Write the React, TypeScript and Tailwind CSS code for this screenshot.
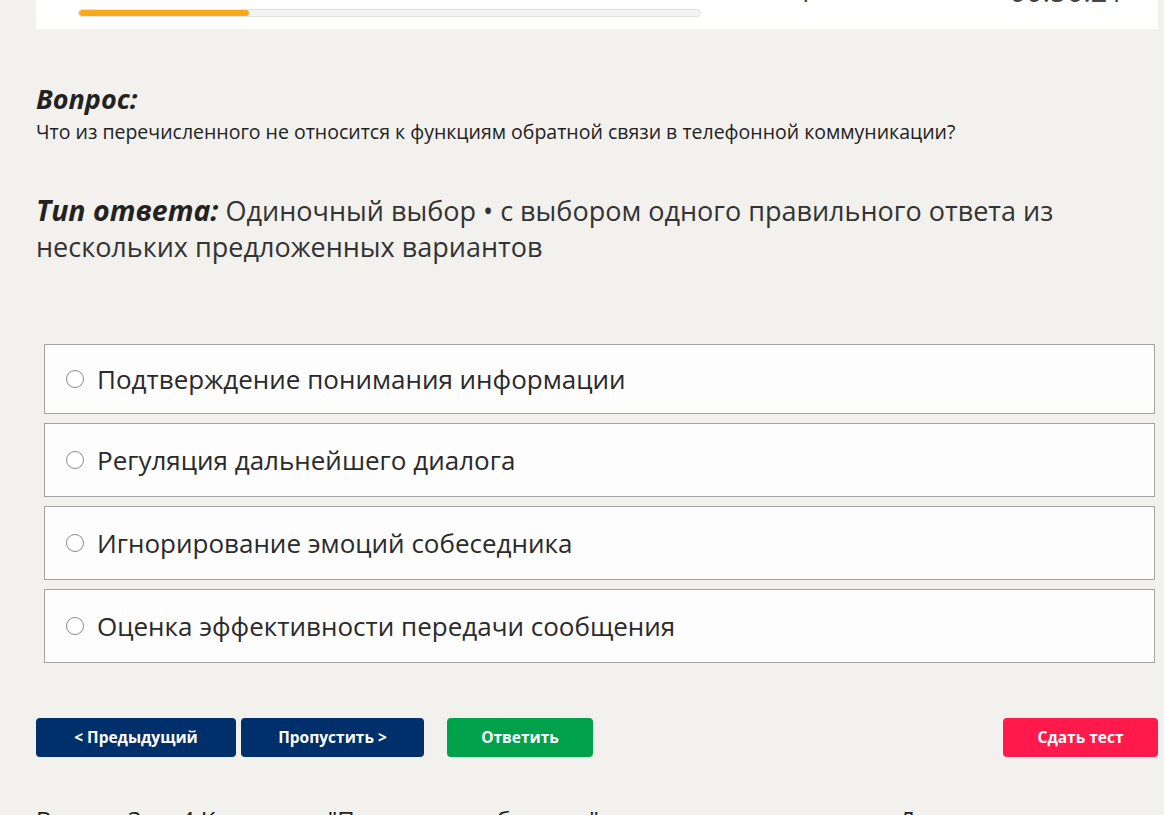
import React from "react";

const options = [
  "Подтверждение понимания информации",
  "Регуляция дальнейшего диалога",
  "Игнорирование эмоций собеседника",
  "Оценка эффективности передачи сообщения",
];

export default function App() {
  return (
    <div
      className="min-h-[815px] w-full overflow-hidden bg-[#f2f1ee] text-[#222]"
      style={{ fontFamily: '"Open Sans", "Noto Sans", sans-serif' }}
    >
      <div className="-mt-[40px] px-[36px] pr-[6px]">
        <div className="flex h-[69px] items-end justify-between bg-white pb-[12px] pl-[42px] pr-[34px]">
          <div className="h-[8px] w-[623px] overflow-hidden rounded-full border border-[#e2e2e2] bg-[#f3f3f3]">
            <div className="h-full w-[170px] rounded-full bg-[#f7a81b]" />
          </div>
          <div className="mb-[12px] flex items-center text-[29px] leading-none text-[#444]">
            <span className="mr-[196px]">1</span>
            <span>00:50:21</span>
          </div>
        </div>

        <div className="pt-[53px]">
          <h2 className="text-[27px] font-bold italic leading-[34px] text-[#222]">Вопрос:</h2>
          <p className="mt-[3px] text-[19.5px] leading-[26px] text-[#222]">
            Что из перечисленного не относится к функциям обратной связи в телефонной коммуникации?
          </p>
        </div>

        <p className="mt-[47px] pr-[90px] text-[27px] leading-[36px] text-[#333]">
          <span className="text-[28.5px] font-bold italic text-[#222]">Тип ответа:</span> Одиночный выбор • с
          выбором одного правильного ответа из нескольких предложенных вариантов
        </p>

        <div className="mt-[79px] flex flex-col gap-[9px] pl-[8px] pr-[3px]">
          {options.map((o, i) => (
            <label
              key={i}
              className={`flex ${i === 0 ? "h-[70px]" : "h-[74px]"} cursor-pointer items-center gap-[13px] border-[1.5px] border-[#a3a3a3] bg-[#fdfdfd] pl-[21px]`}
            >
              <span className="h-[18px] w-[18px] shrink-0 rounded-full border-[1.5px] border-[#8a8a8a] bg-white" />
              <span className="text-[26px] leading-none text-[#2a2a2a]">{o}</span>
            </label>
          ))}
        </div>

        <div className="mt-[55px] flex items-center">
          <button className="h-[39px] w-[200px] rounded-[4px] bg-[#00306b] text-[15.5px] font-bold text-white">
            &lt; Предыдущий
          </button>
          <button className="ml-[5px] h-[39px] w-[183px] rounded-[4px] bg-[#00306b] text-[15.5px] font-bold text-white">
            Пропустить &gt;
          </button>
          <button className="ml-[23px] h-[39px] w-[146px] rounded-[4px] bg-[#00a14b] text-[15.5px] font-bold text-white">
            Ответить
          </button>
          <button className="ml-auto h-[39px] w-[155px] rounded-[4px] bg-[#ff1a4b] text-[15.5px] font-bold text-white">
            Сдать тест
          </button>
        </div>

        <div className="mt-[48px] flex text-[24px] leading-[30px] text-[#222]">
          <span>Вопрос 3 из 4 Категория "Психология общения"</span>
          <span className="ml-[300px]">Дата</span>
        </div>
      </div>
    </div>
  );
}
